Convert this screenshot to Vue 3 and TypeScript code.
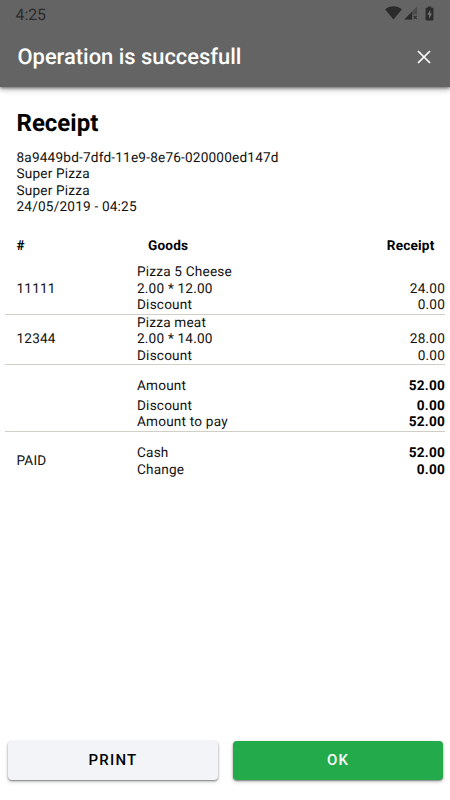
<script setup lang="ts">
interface ReceiptLine {
  label: string
  value: string
}

interface ReceiptGroup {
  code: string
  kind: string
  lines: ReceiptLine[]
}

const title = 'Operation is succesfull'

const details: string[] = [
  '8a9449bd-7dfd-11e9-8e76-020000ed147d',
  'Super Pizza',
  'Super Pizza',
  '24/05/2019 - 04:25',
]

const groups: ReceiptGroup[] = [
  {
    code: '11111',
    kind: 'item',
    lines: [
      { label: 'Pizza 5 Cheese', value: '' },
      { label: '2.00 * 12.00', value: '24.00' },
      { label: 'Discount', value: '0.00' },
    ],
  },
  {
    code: '12344',
    kind: 'item',
    lines: [
      { label: 'Pizza meat', value: '' },
      { label: '2.00 * 14.00', value: '28.00' },
      { label: 'Discount', value: '0.00' },
    ],
  },
  {
    code: '',
    kind: 'totals',
    lines: [
      { label: 'Amount', value: '52.00' },
      { label: 'Discount', value: '0.00' },
      { label: 'Amount to pay', value: '52.00' },
    ],
  },
  {
    code: 'PAID',
    kind: 'paid',
    lines: [
      { label: 'Cash', value: '52.00' },
      { label: 'Change', value: '0.00' },
    ],
  },
]
</script>

<template>
  <div class="screen">
    <header class="top">
      <div class="status">
        <span class="clock">4:25</span>
        <div class="status-icons">
          <svg class="wifi" viewBox="0 0 17 14">
            <path d="M0.2 3.4C2.4 1.4 5.3 0.3 8.5 0.3s6.1 1.1 8.3 3.1L8.5 13.6z" fill="#2b2b2b" />
          </svg>
          <svg class="signal" viewBox="0 0 14 14">
            <path d="M13.2 0.6V8.4H8.4V13.4H0.4z" fill="#4b4b4b" />
            <path d="M8 5.8V13.4H0.4z" fill="#2b2b2b" />
            <path d="M9.7 9.9l3 3M12.7 9.9l-3 3" stroke="#2b2b2b" stroke-width="1.1" />
          </svg>
          <svg class="battery" viewBox="0 0 9 15">
            <path d="M2.8 0.4h3.4v1.3h1.3q0.9 0 0.9 0.9v10.9q0 0.9-0.9 0.9h-6q-0.9 0-0.9-0.9v-10.9q0-0.9 0.9-0.9h1.3z" fill="#2b2b2b" />
            <path d="M5.4 3.6L2.3 8.7h1.8v4L7 7.5H5.2z" fill="#747474" />
          </svg>
        </div>
      </div>
      <div class="toolbar">
        <h1>{{ title }}</h1>
        <button class="close" aria-label="Close">
          <svg viewBox="0 0 14 14">
            <path d="M1 1l12 12M13 1L1 13" stroke="#fff" stroke-width="1.7" />
          </svg>
        </button>
      </div>
    </header>

    <main class="content">
      <section class="intro">
        <h2>Receipt</h2>
        <p v-for="(line, i) in details" :key="i">{{ line }}</p>
      </section>

      <section class="table">
        <div class="head">
          <span class="h-code">#</span>
          <span class="h-goods">Goods</span>
          <span class="h-sum">Receipt</span>
        </div>
        <div v-for="(group, g) in groups" :key="g" class="group" :class="group.kind">
          <span class="code">{{ group.code }}</span>
          <div class="lines">
            <div v-for="(line, l) in group.lines" :key="l" class="line">
              <span>{{ line.label }}</span>
              <span class="value">{{ line.value }}</span>
            </div>
          </div>
        </div>
      </section>
    </main>

    <footer class="actions">
      <button class="btn print">PRINT</button>
      <button class="btn ok">OK</button>
    </footer>
  </div>
</template>

<style>
body {
  margin: 0;
  background: #fff;
}
</style>

<style scoped>
.screen {
  display: flex;
  flex-direction: column;
  width: 450px;
  height: 800px;
  overflow: hidden;
  background: #fff;
  color: #000;
  font-family: Roboto, "Liberation Sans", sans-serif;
  font-size: 13.6px;
  text-rendering: geometricPrecision;
}

h1,
h2,
p {
  margin: 0;
}

button {
  border: 0;
  padding: 0;
  font-family: inherit;
}

.top {
  flex: none;
  height: 87px;
  background: #646464;
  box-shadow: 0 1px 3px rgba(0, 0, 0, 0.5), 0 3px 6px rgba(0, 0, 0, 0.22);
}

.status {
  display: flex;
  justify-content: space-between;
  height: 28px;
  padding: 0 15.6px 0 15.5px;
  color: #2b2b2b;
}

.clock {
  font-size: 15.8px;
  line-height: 29px;
}

.status-icons {
  display: flex;
  padding-top: 6px;
}

.status-icons svg {
  display: block;
}

.wifi {
  width: 17px;
  height: 14px;
}

.signal {
  width: 14px;
  height: 14px;
  margin-left: 2px;
}

.battery {
  width: 9px;
  height: 15px;
  margin-left: 7px;
}

.toolbar {
  display: flex;
  align-items: center;
  justify-content: space-between;
  height: 58px;
  padding: 0 19px 0 17.5px;
}

h1 {
  padding-top: 1px;
  color: #fff;
  font-size: 21.9px;
  font-weight: 500;
  line-height: 28px;
}

.close {
  display: flex;
  background: none;
}

.close svg {
  width: 14px;
  height: 14px;
}

.content {
  flex: 1;
}

.intro {
  padding: 21px 16px 0 16.5px;
}

h2 {
  margin-bottom: 11.5px;
  font-size: 24px;
  font-weight: 700;
  line-height: 30px;
}

.intro p {
  color: #111;
  line-height: 16.5px;
  letter-spacing: 0.2px;
}

.table {
  margin: 21.5px 5px 0 5px;
}

.head {
  display: flex;
  box-sizing: border-box;
  height: 27px;
  padding: 0.5px 10.5px 0 11.5px;
  font-weight: 700;
  line-height: 17px;
  letter-spacing: 0.2px;
}

.h-code {
  width: 131.5px;
}

.h-goods {
  flex: 1;
}

.group {
  display: flex;
  align-items: center;
  border-bottom: 1px solid #cfcfc5;
  color: #111;
  line-height: 16.5px;
  letter-spacing: 0.2px;
}

.code {
  width: 120.5px;
  padding-left: 11.5px;
}

.lines {
  flex: 1;
}

.line {
  display: flex;
  justify-content: space-between;
  height: 16.5px;
}

.totals {
  padding-top: 12.5px;
}

.totals .line:first-child {
  margin-bottom: 3.5px;
}

.paid {
  padding-top: 13.5px;
  border-bottom: 0;
}

.totals .value,
.paid .value {
  color: #000;
  font-weight: 700;
}

.actions {
  display: flex;
  gap: 15px;
  padding: 0 7px 20px 8px;
}

.btn {
  flex: 1;
  height: 39.5px;
  border-radius: 4px;
  font-size: 15px;
  font-weight: 500;
  letter-spacing: 1.2px;
  box-shadow: 0 1px 2px rgba(0, 0, 0, 0.45), 0 2px 4px rgba(0, 0, 0, 0.14);
}

.print {
  background: #f3f4f8;
  color: #000;
}

.ok {
  background: #22aa4b;
  color: #fff;
}
</style>
